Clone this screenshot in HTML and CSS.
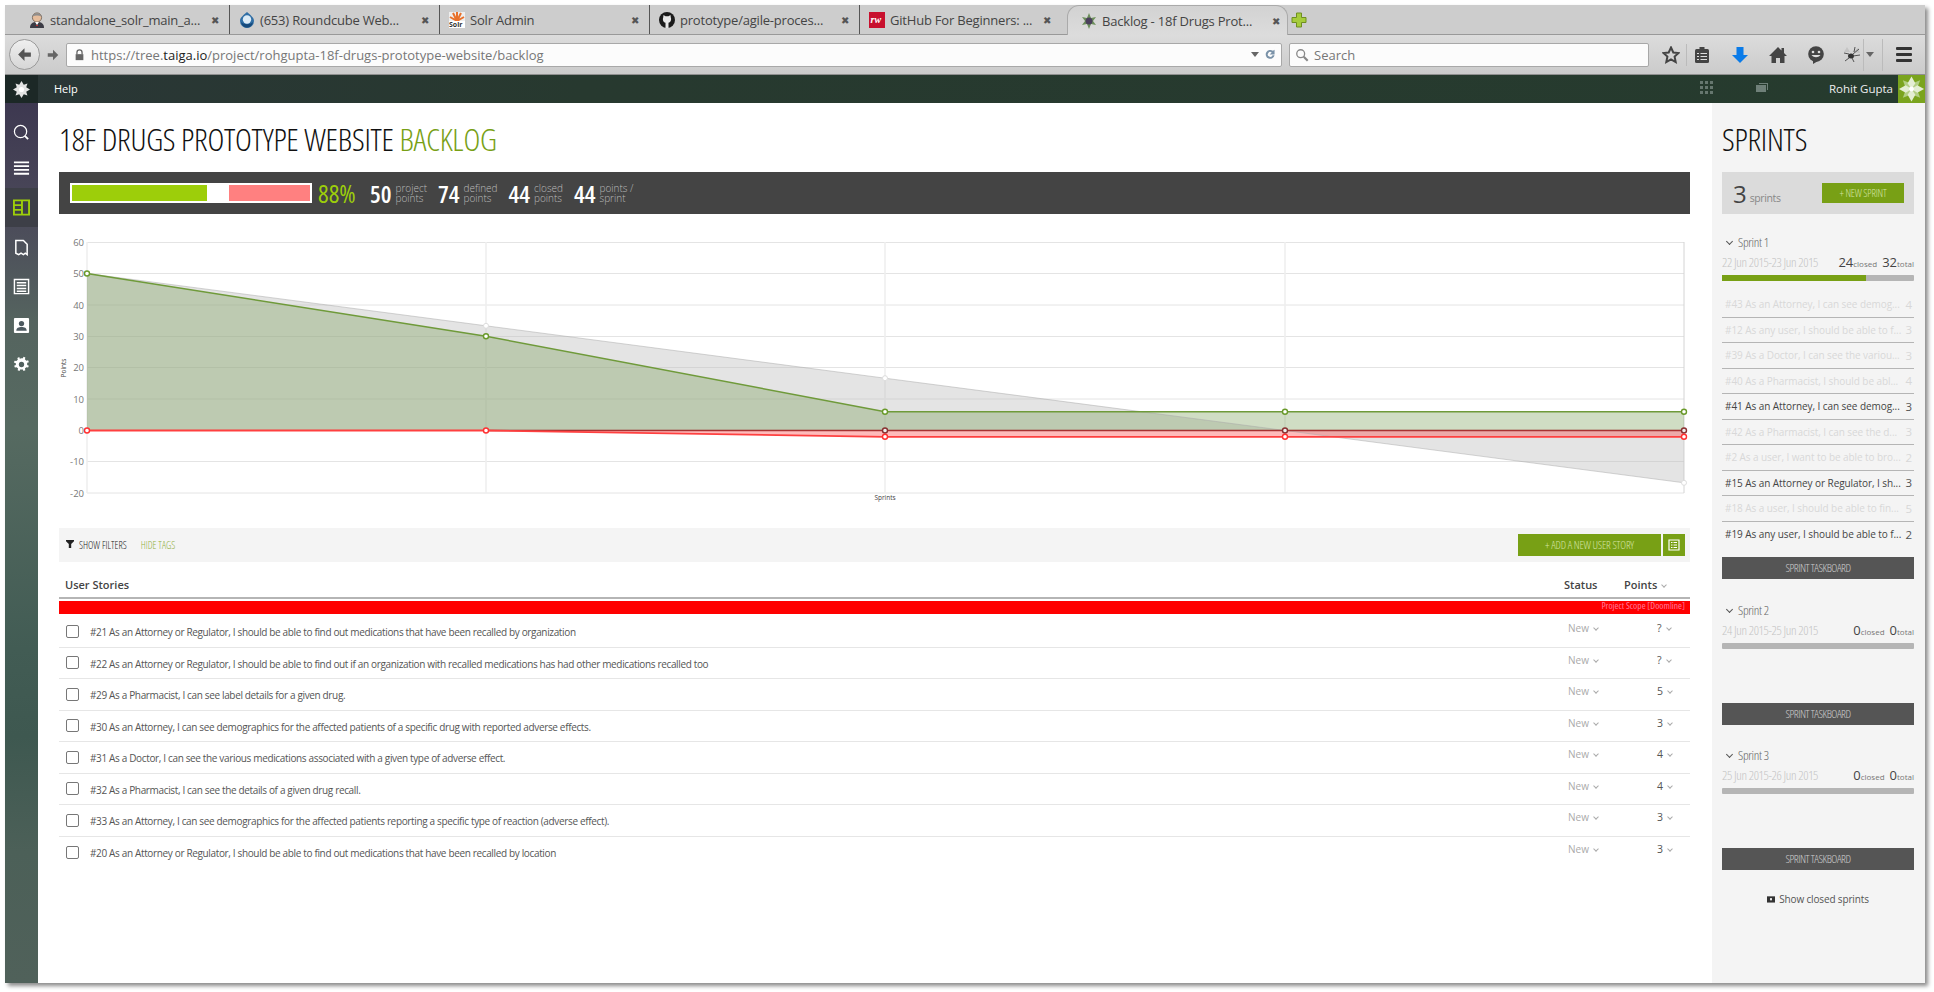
FILE: index.html
```html
<!DOCTYPE html>
<html lang="en">
<head>
    <meta charset="UTF-8">
    <meta name="viewport" content="width=device-width, initial-scale=1.0">
    <title>Backlog - 18f Drugs Prototype Website</title>
    <link rel="stylesheet" href="styles.css">
</head>
<body>
<div class="window">
    <!-- browser tabs -->
    <div class="tabstrip">
        <div class="tab tab-first">
            <svg class="favicon" viewBox="0 0 16 16"><path d="M1 16c0-5 3-6 7-6s7 1 7 6z" fill="#3c3c46"/><circle cx="8" cy="5.5" r="4.6" fill="#e6bd9c" stroke="#6b5a4c" stroke-width=".8"/><path d="M3.500 4.500C4 0 12 0 12.500 4.500 10 3 6 3 3.500 4.500z" fill="#8d8d8d"/><path d="M6 10l2 3 2-3z" fill="#fff"/><path d="M7 13h2v1H7z" fill="#c03030"/></svg>
            <span class="tab-title">standalone_solr_main_a...</span><span class="tab-close">✖</span>
        </div>
        <div class="tab">
            <svg class="favicon" viewBox="0 0 16 16"><path d="M8 0c3 3 7 5 7 9a7 7 0 0 1-14 0c0-4 4-6 7-9z" fill="#2f6ea5"/><circle cx="8" cy="7.500" r="4.200" fill="#dcebf6"/><path d="M2 10c3 3 9 3 12 0-1 4-3 5.500-6 5.500S3 14 2 10z" fill="#164a7c"/></svg>
            <span class="tab-title">(653) Roundcube Web...</span><span class="tab-close">✖</span>
        </div>
        <div class="tab">
            <svg class="favicon" viewBox="0 0 16 16"><rect width="16" height="16" fill="#eee"/><path d="M8 9L1 5M8 9L4 1M8 9L8 0M8 9L12 1M8 9L15 5" stroke="#e8702a" stroke-width="2"/><rect x="0" y="9" width="16" height="7" fill="#fff"/><text x="0" y="15" class="solr-mark">Solr</text></svg>
            <span class="tab-title">Solr Admin</span><span class="tab-close">✖</span>
        </div>
        <div class="tab">
            <svg class="favicon" viewBox="0 0 16 16"><circle cx="8" cy="8" r="8" fill="#1b1b1b"/><path d="M4.500 3l2 1.200h3L11.500 3l.3 2.500c1 2.500-.5 5-2.300 5.200V16h-3v-5.300c-1.800-.2-3.300-2.700-2.300-5.200z" fill="#e8e8e8"/></svg>
            <span class="tab-title">prototype/agile-proces...</span><span class="tab-close">✖</span>
        </div>
        <div class="tab tab-last">
            <svg class="favicon" viewBox="0 0 16 16"><rect width="16" height="16" fill="#c8102e"/><text x="1.500" y="11" class="rw-mark">rw</text></svg>
            <span class="tab-title">GitHub For Beginners: ...</span><span class="tab-close">✖</span>
        </div>
        <div class="tab tab-active">
            <svg class="favicon" viewBox="0 0 16 16"><path d="M8 0l2 5 5-1-3 4 3 4-5-1-2 5-2-5-5 1 3-4-3-4 5 1z" fill="#6c8f5a"/><circle cx="8" cy="8" r="3.500" fill="#4b3f5c"/></svg>
            <span class="tab-title">Backlog - 18f Drugs Prot...</span><span class="tab-close">✖</span>
        </div>
        <svg class="new-tab" viewBox="0 0 16 16"><path d="M5.500 1h5v4.500H15v5h-4.500V15h-5v-4.500H1v-5h4.500z" fill="#a6cc3c" stroke="#6f8f20"/></svg>
    </div>

    <!-- browser toolbar -->
    <div class="toolbar">
        <div class="back-btn"><svg viewBox="0 0 16 16"><path d="M8 2L2 8l6 6v-4h6V6H8z" fill="#555"/></svg></div>
        <svg class="fwd-btn" viewBox="0 0 16 16"><path d="M8 2l6 6-6 6v-4H2V6h6z" fill="#666"/></svg>
        <div class="urlbar">
            <svg class="lock" viewBox="0 0 12 14"><path d="M3 6V4a3 3 0 0 1 6 0v2" fill="none" stroke="#666" stroke-width="1.500"/><rect x="1.500" y="6" width="9" height="7" fill="#666"/></svg>
            <span class="url">https://tree.<b>taiga.io</b>/project/rohgupta-18f-drugs-prototype-website/backlog</span>
            <span class="url-drop"></span>
            <svg class="reload" viewBox="0 0 16 16"><path d="M13 9a5.500 5.500 0 1 1-2-5.500L13 2v6H7l2.500-2.500A3 3 0 1 0 10.500 9z" fill="#7a92a8"/></svg>
        </div>
        <div class="searchbar">
            <svg class="lens" viewBox="0 0 16 16"><circle cx="6.500" cy="6.500" r="4.500" fill="none" stroke="#888" stroke-width="1.500"/><path d="M10 10l4.500 4.500" stroke="#888" stroke-width="2.500"/></svg>
            <span>Search</span>
        </div>
        <div class="tool-icons">
            <svg class="tool" viewBox="0 0 18 18"><path d="M9 1.500l2.300 5 5.200.6-3.900 3.500 1.100 5.400L9 13.300 4.300 16l1.100-5.400L1.500 7.100l5.200-.6z" fill="none" stroke="#444" stroke-width="2"/></svg>
            <i class="tool-sep"></i>
            <svg class="tool clip" viewBox="0 0 18 18"><rect x="2" y="3" width="14" height="14" rx="1.500" fill="#444"/><rect x="6.500" y="1" width="5" height="3" fill="#444"/><path d="M4 7.500h2M4 10.500h2M4 13.500h2M7.500 7.500H14M7.500 10.500H14M7.500 13.500H14" stroke="#ddd" stroke-width="1.200"/></svg>
            <svg class="tool down" viewBox="0 0 18 18"><path d="M5.500 1h7v8H17l-8 8-8-8h4.500z" fill="#0a7be8"/></svg>
            <svg class="tool home" viewBox="0 0 18 18"><path d="M9 1L0 10h2.500v7h4.500v-5h4v5h4.500v-7H18l-3-3V2h-2.500v2.500z" fill="#444"/></svg>
            <svg class="tool smile" viewBox="0 0 18 18"><circle cx="9" cy="8" r="7.800" fill="#444"/><path d="M6 14l0 4 5-3z" fill="#444"/><circle cx="6" cy="6" r="1.300" fill="#ddd"/><circle cx="12" cy="6" r="1.300" fill="#ddd"/><path d="M4.500 9c2.500 3 6.500 3 9 0z" fill="#ddd"/></svg>
            <svg class="tool bug" viewBox="0 0 18 18"><path d="M9 6l6-4 2 5z" fill="#c4c4c4"/><path d="M7 6L4 1 1 6z" fill="#c4c4c4"/><ellipse cx="8" cy="10" rx="3" ry="2.500" fill="#333"/><path d="M10 8l6-5M10 10l7-1M6 8L1 7M6 12l-4 3M9 12l2 4M11 6l1-5" stroke="#444" stroke-width=".9"/></svg>
            <i class="tool-sep tool-sep-c"></i>
            <span class="bug-drop"></span>
            <i class="tool-sep tool-sep-b"></i>
            <div class="menu-btn"><i></i><i></i><i></i></div>
        </div>
    </div>

    <!-- taiga top bar -->
    <div class="topbar">
        <div class="logo-box">
            <svg class="flower" viewBox="0 0 20 20"><g fill="#e4e4e4"><path d="M10 0l3 5-3 5-3-5z"/><path d="M10 20l3-5-3-5-3 5z"/><path d="M0 10l5-3 5 3-5 3z"/><path d="M20 10l-5-3-5 3 5 3z"/><path d="M3 3l6 2 1 5-5-1z"/><path d="M17 3l-6 2-1 5 5-1z"/><path d="M3 17l6-2 1-5-5 1z"/><path d="M17 17l-6-2-1-5 5 1z"/></g><circle cx="10" cy="10" r="3" fill="#fff"/></svg>
        </div>
        <a class="help-link">Help</a>
        <div class="top-right">
            <div class="grid-icon"><i></i><i></i><i></i><i></i><i></i><i></i><i></i><i></i><i></i></div>
            <svg class="folder-icon" viewBox="0 0 12 9"><path d="M0 2h10v7H0z" fill="#6f8079"/><path d="M3 0h9v7h-1V1H3z" fill="#6f8079"/></svg>
            <span class="user-name">Rohit Gupta</span>
            <div class="avatar">
                <svg viewBox="0 0 28 28"><g fill="#b3cf85"><path d="M5 5l8 3 1 6-6-1z"/><path d="M23 5l-8 3-1 6 6-1z"/><path d="M5 23l8-3 1-6-6 1z"/><path d="M23 23l-8-3-1-6 6 1z"/></g><g fill="#e4eed4"><path d="M14 1l4 7-4 6-4-6z"/><path d="M14 27l4-7-4-6-4 6z"/><path d="M1 14l7-4 6 4-6 4z"/><path d="M27 14l-7-4-6 4 6 4z"/></g><circle cx="14" cy="14" r="2.500" fill="#fff"/></svg>
            </div>
        </div>
    </div>

    <div class="app">
        <!-- left icon rail -->
        <nav class="rail">
            <svg class="rail-icon rail-search" viewBox="0 0 18 18"><circle cx="8" cy="8" r="6.500" fill="none" stroke="#fff" stroke-width="1.300"/><path d="M12.500 12.500l3.500 3.500" stroke="#fff" stroke-width="2"/></svg>
            <svg class="rail-icon" viewBox="0 0 18 18"><path d="M1 2.500h16M1 6.500h16M1 10.500h16M1 14.500h16" stroke="#fff" stroke-width="2"/></svg>
            <div class="rail-active"><svg class="rail-icon" viewBox="0 0 18 18"><path d="M1 1.500h16v15H1zM9.500 1.500v15M1 6.500h8.500M1 11.500h8.500" fill="none" stroke="#9dce0a" stroke-width="2"/></svg></div>
            <svg class="rail-icon" viewBox="0 0 18 18"><path d="M3 1.500h8l4 4v11l-2-1.500-2 1.500-2.500-1.500L6 16.500l-3-1.500z" fill="none" stroke="#fff" stroke-width="1.600"/></svg>
            <svg class="rail-icon" viewBox="0 0 18 18"><path d="M1.500 1.500h15v15h-15z" fill="none" stroke="#fff" stroke-width="1.500"/><path d="M4 5h10M4 8h10M4 11h10M4 14h10" stroke="#fff" stroke-width="1.600"/></svg>
            <svg class="rail-icon" viewBox="0 0 18 18"><rect x="1" y="1" width="16" height="16" rx="1" fill="#fff"/><circle cx="9" cy="7" r="2.800" fill="#4d5a60"/><path d="M3.500 14.500c0-3 2.500-4 5.500-4s5.500 1 5.500 4z" fill="#4d5a60"/></svg>
            <svg class="rail-icon" viewBox="0 0 18 18"><path d="M9 2.500l1.500 0 .6-1.800 2 .9-.5 1.900 1.500 1.500 1.900-.5.800 2-1.800.7v2.400l1.800.7-.8 2-1.900-.5-1.500 1.500.5 1.900-2 .8-.7-1.800H7.600l-.7 1.800-2-.8.5-1.900-1.500-1.500-1.900.5-.8-2 1.800-.7V7.600L.9 6.900l.8-2 1.900.5 1.500-1.500-.5-1.900 2-.9.6 1.800z" fill="#fff"/><circle cx="9" cy="9" r="2.800" fill="#51615f"/></svg>
        </nav>

        <main class="main">
            <h1 class="page-title">18F DRUGS PROTOTYPE WEBSITE <span>BACKLOG</span></h1>

            <section class="stats">
                <div class="progress"><i class="p-green"></i><i class="p-white"></i><i class="p-red"></i></div>
                <span class="percent">88%</span>
                <div class="stat"><b>50</b><small>project<br>points</small></div>
                <div class="stat"><b>74</b><small>defined<br>points</small></div>
                <div class="stat"><b>44</b><small>closed<br>points</small></div>
                <div class="stat"><b>44</b><small>points /<br>sprint</small></div>
            </section>

            <svg class="burndown" viewBox="0 0 1631 280" width="1631" height="280">
                <g class="grid-h">
                    <path d="M28 10.500H1625M28 41.500H1625M28 73H1625M28 104.500H1625M28 135.500H1625M28 167H1625M28 198H1625M28 229.500H1625M28 261H1625"/>
                </g>
                <g class="grid-v">
                    <path d="M28 10V261M427 10V261M826 10V261M1226 10V261"/>
                    <path class="grid-end" d="M1625 10V261"/>
                </g>
                <g class="y-labels">
                    <text x="25" y="14">60</text><text x="25" y="45">50</text><text x="25" y="77">40</text><text x="25" y="108">30</text><text x="25" y="139">20</text><text x="25" y="171">10</text><text x="25" y="202">0</text><text x="25" y="233">-10</text><text x="25" y="265">-20</text>
                </g>
                <text class="axis-name" transform="translate(7 136) rotate(-90)">Points</text>
                <text class="axis-name" x="826" y="268">Sprints</text>

                <polygon class="fill-gray" points="28,41.500 427,93.800 826,146.200 1226,198.500 1625,250.800 1625,198.500 28,198.500"/>
                <polygon class="fill-green" points="28,41.500 427,104.300 826,179.700 1226,179.700 1625,179.700 1625,198.500 28,198.500"/>
                <polygon class="fill-red" points="427,198.500 826,204.800 1226,204.800 1625,204.800 1625,198.500"/>
                <polyline class="line-gray" points="28,41.500 427,93.800 826,146.200 1226,198.500 1625,250.800"/>
                <polyline class="line-green" points="28,41.500 427,104.300 826,179.700 1226,179.700 1625,179.700"/>
                <polyline class="line-dark" points="427,198.500 826,198.500 1226,198.500 1625,198.500"/>
                <polyline class="line-red" points="28,198.500 427,198.500 826,204.800 1226,204.800 1625,204.800"/>

                <g class="dots-gray"><circle cx="427" cy="93.800" r="2.500"/><circle cx="826" cy="146.200" r="2.500"/><circle cx="1625" cy="250.800" r="2.500"/></g>
                <g class="dots-green"><circle cx="28" cy="41.500" r="2.500"/><circle cx="427" cy="104.300" r="2.500"/><circle cx="826" cy="179.700" r="2.500"/><circle cx="1226" cy="179.700" r="2.500"/><circle cx="1625" cy="179.700" r="2.500"/></g>
                <g class="dots-dark"><circle cx="826" cy="198.500" r="2.500"/><circle cx="1226" cy="198.500" r="2.500"/><circle cx="1625" cy="198.500" r="2.500"/></g>
                <g class="dots-red"><circle cx="28" cy="198.500" r="2.500"/><circle cx="427" cy="198.500" r="2.500"/><circle cx="826" cy="204.800" r="2.500"/><circle cx="1226" cy="204.800" r="2.500"/><circle cx="1625" cy="204.800" r="2.500"/></g>
            </svg>

            <div class="filterbar">
                <svg class="funnel" viewBox="0 0 10 10"><path d="M0 0h10v1.500L6.500 5v5h-3V5L0 1.500z" fill="#222"/></svg>
                <span class="show-filters">SHOW FILTERS</span>
                <span class="hide-tags">HIDE TAGS</span>
                <a class="btn-add">+ ADD A NEW USER STORY</a>
                <a class="btn-bulk"><svg viewBox="0 0 12 12"><path d="M1 1h10v10H1z" fill="none" stroke="#fff" stroke-width="1.200"/><path d="M3 3.500h1.500M3 6h1.500M3 8.500h1.500M5.500 3.500H9M5.500 6H9M5.500 8.500H9" stroke="#fff"/></svg></a>
            </div>

            <div class="table-head">
                <span class="th-title">User Stories</span>
                <span class="th-status">Status</span>
                <span class="th-points">Points</span><span class="chev chev-head"></span>
            </div>
            <div class="doomline">Project Scope [Doomline]</div>

            <div class="row"><i class="check"></i><span class="row-title">#21 As an Attorney or Regulator, I should be able to find out medications that have been recalled by organization</span><span class="row-status">New<span class="chev"></span></span><span class="row-points">?<span class="chev"></span></span></div>
            <div class="row"><i class="check"></i><span class="row-title">#22 As an Attorney or Regulator, I should be able to find out if an organization with recalled medications has had other medications recalled too</span><span class="row-status">New<span class="chev"></span></span><span class="row-points">?<span class="chev"></span></span></div>
            <div class="row"><i class="check"></i><span class="row-title">#29 As a Pharmacist, I can see label details for a given drug.</span><span class="row-status">New<span class="chev"></span></span><span class="row-points">5<span class="chev"></span></span></div>
            <div class="row"><i class="check"></i><span class="row-title">#30 As an Attorney, I can see demographics for the affected patients of a specific drug with reported adverse effects.</span><span class="row-status">New<span class="chev"></span></span><span class="row-points">3<span class="chev"></span></span></div>
            <div class="row"><i class="check"></i><span class="row-title">#31 As a Doctor, I can see the various medications associated with a given type of adverse effect.</span><span class="row-status">New<span class="chev"></span></span><span class="row-points">4<span class="chev"></span></span></div>
            <div class="row"><i class="check"></i><span class="row-title">#32 As a Pharmacist, I can see the details of a given drug recall.</span><span class="row-status">New<span class="chev"></span></span><span class="row-points">4<span class="chev"></span></span></div>
            <div class="row"><i class="check"></i><span class="row-title">#33 As an Attorney, I can see demographics for the affected patients reporting a specific type of reaction (adverse effect).</span><span class="row-status">New<span class="chev"></span></span><span class="row-points">3<span class="chev"></span></span></div>
            <div class="row row-last"><i class="check"></i><span class="row-title">#20 As an Attorney or Regulator, I should be able to find out medications that have been recalled by location</span><span class="row-status">New<span class="chev"></span></span><span class="row-points">3<span class="chev"></span></span></div>
        </main>

        <!-- sprints column -->
        <aside class="sprints">
            <h2 class="sprints-title">SPRINTS</h2>
            <div class="sprints-box">
                <b>3</b><span>sprints</span>
                <a class="btn-sprint">+ NEW SPRINT</a>
            </div>

            <section class="sprint">
                <div class="sprint-name"><span class="chev chev-dark"></span>Sprint 1</div>
                <div class="sprint-meta"><span class="sprint-date">22 Jun 2015-23 Jun 2015</span><span class="sprint-count"><b>24</b>closed</span><span class="sprint-count"><b>32</b>total</span></div>
                <div class="sprint-bar"><i class="bar-75"></i></div>
                <ul class="sprint-list">
                    <li class="done"><span>#43 As an Attorney, I can see demog...</span><b>4</b></li>
                    <li class="done"><span>#12 As any user, I should be able to f...</span><b>3</b></li>
                    <li class="done"><span>#39 As a Doctor, I can see the variou...</span><b>3</b></li>
                    <li class="done"><span>#40 As a Pharmacist, I should be abl...</span><b>4</b></li>
                    <li><span>#41 As an Attorney, I can see demog...</span><b>3</b></li>
                    <li class="done"><span>#42 As a Pharmacist, I can see the d...</span><b>3</b></li>
                    <li class="done"><span>#2 As a user, I want to be able to bro...</span><b>2</b></li>
                    <li><span>#15 As an Attorney or Regulator, I sh...</span><b>3</b></li>
                    <li class="done"><span>#18 As a user, I should be able to fin...</span><b>5</b></li>
                    <li><span>#19 As any user, I should be able to f...</span><b>2</b></li>
                </ul>
                <a class="btn-taskboard">SPRINT TASKBOARD</a>
            </section>

            <section class="sprint sprint-empty">
                <div class="sprint-name"><span class="chev chev-dark"></span>Sprint 2</div>
                <div class="sprint-meta"><span class="sprint-date">24 Jun 2015-25 Jun 2015</span><span class="sprint-count"><b>0</b>closed</span><span class="sprint-count"><b>0</b>total</span></div>
                <div class="sprint-bar"></div>
                <a class="btn-taskboard">SPRINT TASKBOARD</a>
            </section>

            <section class="sprint sprint-empty">
                <div class="sprint-name"><span class="chev chev-dark"></span>Sprint 3</div>
                <div class="sprint-meta"><span class="sprint-date">25 Jun 2015-26 Jun 2015</span><span class="sprint-count"><b>0</b>closed</span><span class="sprint-count"><b>0</b>total</span></div>
                <div class="sprint-bar"></div>
                <a class="btn-taskboard">SPRINT TASKBOARD</a>
            </section>

            <a class="show-closed"><svg viewBox="0 0 9 8"><path d="M0 1h9v7H0z" fill="#333"/><rect x="3.500" y="3" width="2" height="2.500" fill="#fff"/></svg>Show closed sprints</a>
        </aside>
    </div>
</div>
</body>
</html>
```

FILE: styles.css
```css
* {
    box-sizing: border-box;
}
html, body {
    height: 100%;
}
body {
    margin: 0;
    padding: 5px 0 0 5px;
    background-color: white;
    font-family: "Open Sans", "Noto Sans", sans-serif;
    overflow: hidden;
}
a {
    text-decoration: none;
}
ul {
    list-style: none;
    margin: 0;
    padding: 0;
}

.window {
    width: 1920px;
    height: 978px;
    display: flex;
    flex-direction: column;
    box-shadow: 3px 3px 4px rgba(0, 0, 0, 0.45);
    background-color: white;
}

/* browser chrome */
.tabstrip {
    height: 30px;
    display: flex;
    align-items: center;
    background-color: #cdcdcd;
    border-bottom: 1px solid #999;
}
.tab {
    width: 210px;
    height: 29px;
    display: flex;
    align-items: center;
    padding: 0 10px 0 9px;
    border-right: 1px solid #555;
    font-size: 13px;
    color: #444;
    flex: none;
}
.tab-first {
    width: 225px;
    padding-left: 24px;
}
.tab-last {
    width: 201px;
    border-right: none;
}
.tab-active {
    width: 221px;
    height: 30px;
    margin: 1px 0 0 6px;
    padding: 0 7px 0 13px;
    border: 1px solid #aaa;
    border-bottom: none;
    border-radius: 12px 12px 0 0;
    background: linear-gradient(#d2d2d2, #dcdcdc);
}
.favicon {
    width: 16px;
    height: 16px;
    flex: none;
    margin-right: 5px;
}
.solr-mark {
    font-size: 7px;
    font-weight: bold;
    fill: #333;
}
.rw-mark {
    font-family: "Liberation Serif", serif;
    font-size: 10px;
    font-style: italic;
    font-weight: bold;
    fill: white;
}
.tab-title {
    flex: 1;
    white-space: nowrap;
    letter-spacing: -0.2px;
}
.tab-close {
    font-size: 10px;
    color: #555;
}
.new-tab {
    width: 16px;
    height: 16px;
    margin-left: 3px;
}

.toolbar {
    height: 40px;
    display: flex;
    align-items: center;
    padding: 0 0 0 4px;
    background: linear-gradient(#dcdcdc, #cbcbcb);
    border-bottom: 1px solid #8f8f8f;
}
.back-btn {
    width: 31px;
    height: 31px;
    border-radius: 50%;
    border: 1px solid #9a9a9a;
    background: linear-gradient(#efefef, #d6d6d6);
    display: flex;
    align-items: center;
    justify-content: center;
    flex: none;
}
.back-btn svg {
    width: 17px;
    height: 17px;
}
.fwd-btn {
    width: 14px;
    height: 14px;
    margin: 0 6px;
    flex: none;
}
.urlbar, .searchbar {
    height: 24px;
    background-color: #fcfcfc;
    border: 1px solid #a8a8a8;
    border-radius: 2px;
    display: flex;
    align-items: center;
    font-size: 13px;
    flex: none;
}
.urlbar {
    width: 1216px;
    padding: 0 4px 0 7px;
}
.lock {
    width: 11px;
    height: 12px;
    margin-right: 6px;
}
.url {
    flex: 1;
    color: #777;
}
.url b {
    font-weight: normal;
    color: #222;
}
.url-drop, .bug-drop {
    width: 0;
    height: 0;
    border: 4px solid transparent;
    border-top: 5px solid #666;
    border-bottom: none;
}
.url-drop {
    margin-right: 5px;
}
.reload {
    width: 13px;
    height: 13px;
}
.searchbar {
    width: 360px;
    margin-left: 7px;
    padding-left: 5px;
    color: #777;
}
.lens {
    width: 14px;
    height: 14px;
    margin-right: 5px;
}
.tool-icons {
    flex: 1;
    display: flex;
    align-items: center;
    padding-left: 13px;
    height: 100%;
}
.tool {
    width: 18px;
    height: 18px;
    flex: none;
}
.tool-sep {
    width: 1px;
    height: 22px;
    background-color: #bbb;
    margin: 0 6px;
}
.clip, .down, .home {
    margin-right: 20px;
}
.smile {
    margin-right: 18px;
}
.tool-sep-c {
    height: 32px;
    margin: 0 2px;
}
.tool-sep-b {
    height: 32px;
    margin: 0 0 0 8px;
}
.menu-btn {
    margin-left: 13px;
    width: 16px;
    display: flex;
    flex-direction: column;
    gap: 3px;
}
.menu-btn i {
    height: 3px;
    background-color: #333;
    border-radius: 1px;
}

/* taiga header */
.topbar {
    height: 28px;
    display: flex;
    align-items: center;
    background: linear-gradient(90deg, #2a3636, #27392f 30%, #263b2e 100%);
    color: white;
    flex: none;
}
.logo-box {
    width: 33px;
    height: 28px;
    background-color: #1c2826;
    display: flex;
    align-items: center;
    justify-content: center;
}
.flower {
    width: 17px;
    height: 17px;
}
.help-link {
    margin: 0 0 1px 16px;
    font-size: 11px;
    color: white;
}
.top-right {
    margin-left: auto;
    display: flex;
    align-items: center;
    height: 100%;
}
.grid-icon {
    width: 13px;
    height: 13px;
    display: grid;
    grid-template-columns: repeat(3, 3px);
    grid-auto-rows: 3px;
    gap: 2px;
    margin-bottom: 3px;
}
.grid-icon i {
    background-color: #66776f;
}
.folder-icon {
    width: 12px;
    height: 9px;
    margin: 0 0 3px 43px;
}
.user-name {
    margin: 0 0 2px 61px;
    font-size: 11.5px;
    color: #eee;
}
.avatar {
    width: 27px;
    height: 28px;
    margin-left: 5px;
    background-color: #7aa41e;
}
.avatar svg {
    display: block;
    width: 27px;
    height: 28px;
}

.app {
    flex: 1;
    display: flex;
    min-height: 0;
}

/* left rail */
.rail {
    width: 33px;
    flex: none;
    display: flex;
    flex-direction: column;
    align-items: center;
    padding-top: 21px;
    gap: 22.2px;
    background: linear-gradient(#3d3850 0%, #4a4859 12%, #55645f 25%, #566a61 37%, #425c54 62%, #3e5850 72%, #4c6058 85%, #50615a 100%);
}
.rail-icon {
    width: 17px;
    height: 17px;
    display: block;
}
.rail-search {
    margin-bottom: -3px;
}
.rail-active {
    width: 33px;
    height: 39px;
    margin: -11px 0;
    background-color: #3d3f47;
    display: flex;
    align-items: center;
    justify-content: center;
}

/* main column */
.main {
    width: 1674px;
    flex: none;
    padding: 0 22px 0 21px;
}
.page-title, .sprints-title {
    margin: 17px 0 0;
    height: 52px;
    font-size: 32px;
    line-height: 38px;
    font-weight: 300;
    font-stretch: 75%;
    color: #111;
    letter-spacing: -0.25px;
    white-space: nowrap;
}
.page-title span {
    color: #78a015;
}
.stats {
    height: 42px;
    background-color: #444;
    display: flex;
    align-items: center;
    padding-left: 11px;
    color: white;
}
.progress {
    width: 242px;
    height: 20px;
    border: 2px solid white;
    background-color: white;
    display: flex;
}
.progress i {
    display: block;
}
.p-green {
    width: 135px;
    background-color: #9dce0a;
}
.p-white {
    width: 22px;
}
.p-red {
    width: 81px;
    background-color: #ff8080;
}
.percent {
    margin-left: 6px;
    font-size: 25px;
    color: #9dce0a;
    font-stretch: 85%;
    width: 52px;
}
.stat {
    display: flex;
    align-items: center;
    margin-right: 11px;
}
.stat b {
    font-size: 24px;
    font-weight: 600;
    font-stretch: 75%;
    margin-right: 4px;
}
.stat small {
    font-size: 10px;
    line-height: 10px;
    color: #bbb;
    font-weight: 300;
}

.burndown {
    display: block;
    margin-top: 18px;
}
.grid-h path {
    stroke: #e4e4e4;
    fill: none;
}
.grid-v path {
    stroke: #eee;
    stroke-width: 1.5;
    fill: none;
}
.grid-v .grid-end {
    stroke: #d4d4d4;
    stroke-width: 1;
}
.y-labels text {
    font-size: 9.5px;
    fill: #777;
    text-anchor: end;
}
.axis-name {
    font-size: 6.5px;
    fill: #444;
    text-anchor: middle;
}
.fill-gray {
    fill: rgba(190, 190, 190, 0.42);
}
.fill-green {
    fill: rgba(110, 150, 70, 0.32);
}
.fill-red {
    fill: rgba(255, 60, 60, 0.35);
}
.line-gray {
    fill: none;
    stroke: rgba(170, 170, 170, 0.5);
}
.line-green {
    fill: none;
    stroke: #6f9a3a;
    stroke-width: 1.5;
}
.line-dark {
    fill: none;
    stroke: #a83232;
    stroke-width: 1.5;
}
.line-red {
    fill: none;
    stroke: #ff4040;
    stroke-width: 1.8;
}
.dots-gray circle {
    fill: white;
    stroke: #ddd;
}
.dots-green circle {
    fill: white;
    stroke: #6a9a2a;
    stroke-width: 1.4;
}
.dots-dark circle {
    fill: #eee;
    stroke: #8a3030;
    stroke-width: 1.4;
}
.dots-red circle {
    fill: white;
    stroke: #ff3030;
    stroke-width: 1.4;
}

.filterbar {
    height: 34px;
    margin-top: 16px;
    background-color: #f4f4f4;
    display: flex;
    align-items: center;
    font-stretch: 75%;
    font-size: 10px;
    font-weight: 300;
    padding-left: 7px;
}
.funnel {
    width: 8px;
    height: 8px;
    margin-top: -3px;
    margin-right: 5px;
}
.show-filters {
    color: #222;
}
.hide-tags {
    margin-left: 14px;
    color: #8fb040;
}
.btn-add {
    margin-left: auto;
    width: 143px;
    height: 22px;
    background-color: #78a015;
    color: #d4e3a4;
    font-size: 11px;
    letter-spacing: -0.2px;
    line-height: 22px;
    text-align: center;
}
.btn-bulk {
    width: 22px;
    height: 22px;
    margin: 0 5px 0 2px;
    background-color: #78a015;
    display: flex;
    align-items: center;
    justify-content: center;
}
.btn-bulk svg {
    width: 12px;
    height: 12px;
}

.table-head {
    height: 37px;
    display: flex;
    align-items: center;
    padding: 10px 0 0 6px;
    border-bottom: 2px solid #b5b5b5;
    font-size: 11px;
    font-weight: 600;
    color: #444;
}
.th-title {
    width: 1499px;
}
.th-status {
    width: 60px;
}
.chev {
    display: inline-block;
    width: 4px;
    height: 4px;
    border-right: 1px solid #aaa;
    border-bottom: 1px solid #aaa;
    transform: rotate(45deg);
    margin: 0 0 2px 5px;
}
.chev-head {
    margin-top: 2px;
}
.chev-dark {
    width: 5px;
    height: 5px;
    border-color: #555;
    margin: 0 6px 3px 3px;
}
.doomline {
    height: 13px;
    margin: 2px 0;
    background-color: red;
    color: #ff7a9c;
    font-size: 9.5px;
    line-height: 10px;
    font-stretch: 75%;
    text-align: right;
    padding-right: 5px;
}
.row {
    height: 31.5px;
    display: flex;
    align-items: center;
    border-bottom: 1px solid #e6e6e6;
    padding-left: 7px;
    font-size: 10px;
    color: #555;
}
.row-last {
    border-bottom: none;
}
.check {
    width: 13px;
    height: 13px;
    border: 1px solid #777;
    border-radius: 2px;
    flex: none;
    margin-right: 11px;
}
.row-title {
    width: 1478px;
    flex: none;
    letter-spacing: -0.35px;
    white-space: nowrap;
    padding-top: 2px;
}
.row-status {
    width: 89px;
    color: #aaa;
    padding-bottom: 6px;
    font-size: 10px;
}
.row-points {
    color: #555;
    padding-bottom: 6px;
    font-size: 10.5px;
}

/* sprints column */
.sprints {
    flex: 1;
    background-color: #f4f4f4;
    padding: 0 11px 0 10px;
}
.sprints-box {
    height: 42px;
    background-color: #dbdbdb;
    display: flex;
    align-items: center;
    padding: 0 10px 0 11px;
    color: #666;
}
.sprints-box b {
    font-size: 24px;
    font-weight: 400;
    color: #444;
    margin-right: 3px;
}
.sprints-box span {
    font-size: 10.5px;
    margin-top: 9px;
    color: #888;
    letter-spacing: -0.4px;
}
.btn-sprint {
    margin-left: auto;
    width: 82px;
    height: 20px;
    background-color: #78a015;
    color: #d4e3a4;
    font-size: 10.5px;
    font-weight: 300;
    letter-spacing: -0.2px;
    line-height: 20px;
    font-stretch: 75%;
    text-align: center;
}
.sprint {
    margin-top: 20px;
}
.sprint-empty {
    margin-top: 23px;
    height: 122px;
}
.sprint-name {
    font-size: 13px;
    font-weight: 300;
    letter-spacing: -0.3px;
    line-height: 17px;
    font-stretch: 75%;
    color: #666;
    display: flex;
    align-items: center;
    padding-left: 2px;
}
.sprint-meta {
    display: flex;
    align-items: baseline;
    margin-top: 3px;
    height: 16px;
    font-size: 8px;
    line-height: 16px;
}
.sprint-date {
    flex: 1;
    font-size: 13px;
    letter-spacing: -0.35px;
    font-stretch: 75%;
    font-weight: 300;
    color: #c4c4c4;
}
.sprint-count {
    color: #777;
    margin-left: 5px;
}
.sprint-count b {
    font-size: 13px;
    font-weight: 400;
    color: #444;
}
.sprint-bar {
    height: 6px;
    margin-top: 5px;
    background-color: #b5b5b5;
    border-radius: 1px;
}
.bar-75 {
    display: block;
    width: 75%;
    height: 100%;
    background-color: #78a015;
}
.sprint-list {
    margin-top: 11px;
}
.sprint-list li {
    height: 25.5px;
    display: flex;
    align-items: center;
    justify-content: space-between;
    padding: 0 2px 0 3px;
    border-bottom: 1px solid #b5b5b5;
    font-size: 10px;
    color: #444;
}
.sprint-list li:last-child {
    border-bottom: none;
}
.sprint-list span {
    letter-spacing: -0.07px;
    white-space: nowrap;
}
.sprint-list b {
    font-weight: 400;
    font-size: 11.5px;
    color: #555;
}
.sprint-list .done, .sprint-list .done b {
    color: #d8d8d8;
}
.btn-taskboard {
    display: block;
    height: 22px;
    margin-top: 10px;
    background-color: #555;
    color: #ccc;
    font-size: 11.5px;
    font-weight: 300;
    letter-spacing: -0.5px;
    line-height: 22px;
    font-stretch: 75%;
    text-align: center;
}
.sprint-empty .btn-taskboard {
    margin-top: 54px;
}
.show-closed {
    display: flex;
    align-items: center;
    justify-content: center;
    margin-top: 23px;
    font-size: 10px;
    color: #555;
    letter-spacing: -0.15px;
}
.show-closed svg {
    width: 8px;
    height: 8px;
    margin-right: 4px;
}
```
